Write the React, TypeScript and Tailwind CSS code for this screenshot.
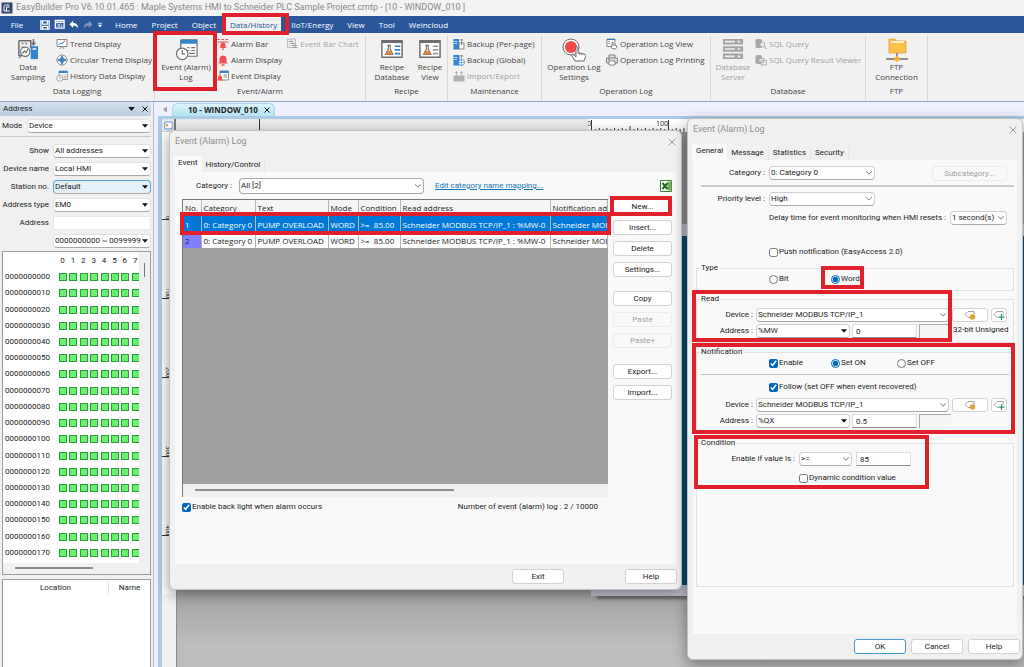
import type { ReactNode } from 'react';
import clsx from 'clsx';

const ADDRESS_ROWS = Array.from({ length: 18 }, (_, i) => String(i * 10).padStart(10, '0'));
const BITS = [0, 1, 2, 3, 4, 5, 6, 7];

const LOG_ROWS = [
  { no: '1', selected: true },
  { no: '2', selected: false },
];

/* ---------- icons ---------- */

function Svg({ size = 12, box = 24, children }: { size?: number; box?: number; children: ReactNode }) {
  return (
    <svg
      width={size}
      height={size}
      viewBox={`0 0 ${box} ${box}`}
      fill="none"
      stroke="#6d6d6d"
      strokeWidth="1.6"
      className="shrink-0"
      aria-hidden="true"
    >
      {children}
    </svg>
  );
}

const SamplingIcon = () => (
  <Svg size={22}>
    <path d="M2 3h13v8M2 3v16h4M5 6h2M9 6h2M5 10h2M5 14h2" />
    <circle cx="9" cy="15" r="5" fill="#fff" strokeWidth="1.2" />
    <path d="M6 17l2-3 2 2 2-4M5 19l-3 3" strokeWidth="1.2" />
    <path d="M18 1v6M16 5l2 2.500 2-2.500" />
    <path d="M15 9h8v14h-8z" fill="#2f83cf" stroke="none" />
    <path d="M17 12h4" stroke="#fff" />
  </Svg>
);

const TrendIcon = () => (
  <Svg>
    <path d="M2 3h20v14H2z" fill="#fff" />
    <path d="M5 14l4-4 3 2 3-4" stroke="#2f83cf" strokeWidth="2" />
    <path d="M14 9l5-4" stroke="#e0503a" strokeWidth="2" />
    <path d="M8 22l3-5M16 22l-3-5" />
  </Svg>
);

const CircularIcon = () => (
  <Svg>
    <circle cx="12" cy="12" r="10" fill="#fff" />
    <path d="M12 4l3 5 5 3-5 3-3 5-3-5-5-3 5-3z" fill="#2f83cf" stroke="#2f83cf" />
    <path d="M12 1v22M1 12h22" strokeWidth="1" />
  </Svg>
);

const ClockWindowIcon = ({ size = 12 }: { size?: number }) => (
  <Svg size={size}>
    <path d="M6 2h17v17H12M6 2v9" fill="#fff" strokeWidth="1.2" />
    <path d="M6 2h17v4H6z" fill="#2f83cf" stroke="none" />
    <path d="M13 10h2M17 10h4M13 13h2M17 13h4M15 16h6" strokeWidth="1.2" />
    <circle cx="7.500" cy="16.500" r="6" fill="#fff" strokeWidth="1.2" />
    <path d="M7.500 12.500v4h3" strokeWidth="1.2" />
  </Svg>
);

const AlarmBarIcon = () => (
  <Svg>
    <path d="M1 3h5M9 3h5M17 3h5M1 8h22" stroke="#d9534f" strokeWidth="2" />
    <path d="M5 20c2-2 2-4 2-6a5 5 0 0110 0c0 2 0 4 2 6z" fill="#ee5350" stroke="none" />
    <path d="M10 22h4" stroke="#ee5350" strokeWidth="2.500" />
  </Svg>
);

const BellIcon = () => (
  <Svg>
    <path d="M2 19c3-2 3-5 3-9a7 7 0 0114 0c0 4 0 7 3 9z" fill="#ee5350" stroke="none" />
    <path d="M9 22h6" stroke="#ee5350" strokeWidth="3" />
  </Svg>
);

const EventDisplayIcon = () => (
  <Svg>
    <path d="M6 2h17v18H6z" fill="#fff" />
    <path d="M6 2h17v4H6z" fill="#2f83cf" stroke="none" />
    <path d="M13 10h7M13 14h7" />
    <path d="M0 21c2-2 2-3 2-6a4 4 0 018 0c0 3 0 4 2 6z" fill="#ee5350" stroke="none" />
  </Svg>
);

const BarChartIcon = () => (
  <Svg>
    <path d="M3 2h16v17H3z" fill="#e6e6e6" stroke="#b4b4b4" />
    <path d="M6 7h8M9 11h9M12 15h10M14 19h9" stroke="#9d9d9d" strokeWidth="2" />
  </Svg>
);

const RecipeIcon = ({ accent }: { accent: string }) => (
  <Svg size={22}>
    <path d="M1 3h22v18H1z" fill="#fff" />
    <path d="M1 4h22" strokeWidth="3" />
    <path d="M7 8h4M8 8v4l-3 6h8l-3-6V8" strokeWidth="1.2" />
    <path d="M7 14h4l2 4H5z" fill="#e2873c" stroke="none" />
    <path d="M15 9h6M15 13h6M15 17h6" stroke={accent} strokeWidth="1.800" />
  </Svg>
);

const BackupIcon = () => (
  <Svg>
    <path d="M1 2h11v21H1z" fill="#2f83cf" stroke="none" />
    <path d="M3 7h6M3 11h5" stroke="#fff" />
    <path d="M12 10h10v12H12z" fill="#fff" />
    <path d="M17 14V2M14 5l3-3 3 3" />
  </Svg>
);

const ImportIcon = () => (
  <Svg>
    <path d="M1 11h22v12H1z" fill="#b0b0b0" stroke="none" />
    <path d="M7 11V3M4 6l3-3 3 3M17 11V3M14 6l3-3 3 3" stroke="#b0b0b0" strokeWidth="2" />
  </Svg>
);

const GlobalBackupIcon = () => (
  <Svg>
    <path d="M1 2h12v21H1z" fill="#2f83cf" stroke="none" />
    <path d="M3 7h6M3 11h5" stroke="#fff" />
    <circle cx="17" cy="17" r="6" fill="#fff" stroke="#2f83cf" />
    <path d="M11 17h12M17 11v12" stroke="#2f83cf" strokeWidth="1.2" />
    <path d="M17 9V2M14 5l3-3 3 3" />
  </Svg>
);

const RecordIcon = () => (
  <Svg size={24}>
    <circle cx="9" cy="9" r="8" fill="#fff" strokeWidth="1" />
    <circle cx="9" cy="9" r="6" fill="#ee4b48" stroke="none" />
    <path
      d="M13 23l-3-5c-1-2 1-2 2-1l2 2v-9c0-2 2-2 2 0v5l6 1c2 0 2 2 1 4l-1 3z"
      fill="#fff"
      strokeWidth="1"
    />
    <path d="M17.500 14.500v2M20 15v2" strokeWidth="1" />
  </Svg>
);

const LogViewIcon = () => (
  <Svg>
    <path d="M2 2h16v15H2z" fill="#fff" />
    <path d="M2 3h16" stroke="#2f83cf" strokeWidth="2" />
    <path d="M5 7h3M5 11h3" />
    <path d="M12 21l-3-5 3 1V9h2v5l7 1v4l-2 3z" fill="#fff" />
  </Svg>
);

const PrinterIcon = () => (
  <Svg>
    <path d="M6 8V2h12v6M1 8h22v10H1z" fill="#ddd" />
    <path d="M6 14h12v8H6z" fill="#fff" />
    <path d="M4 11h3" strokeWidth="2" />
  </Svg>
);

const ServerIcon = () => (
  <Svg size={22}>
    <path d="M1 1h22v6H1zM1 9h22v6H1zM1 17h22v6H1z" fill="#a3a3a3" stroke="none" />
    <path d="M3 4h11M17 4h3M3 12h11M17 12h3M3 20h11M17 20h3" stroke="#efefef" strokeWidth="1.800" />
  </Svg>
);

const QueryIcon = ({ viewer = false }: { viewer?: boolean }) => (
  <Svg>
    <path d="M1 4c0-3 13-3 13 0v14c0 3-13 3-13 0z" fill="#a8a8a8" stroke="none" />
    {viewer ? (
      <path d="M8 9h10v8H8zM12 13h11v9H12z" fill="#eee" stroke="#a0a0a0" />
    ) : (
      <>
        <circle cx="15" cy="13" r="5" fill="#eee" stroke="#a0a0a0" />
        <path d="M19 17l4 5" stroke="#a0a0a0" strokeWidth="2" />
      </>
    )}
  </Svg>
);

const FtpIcon = () => (
  <Svg size={24}>
    <path d="M4 1h6l2 2h9v12H4z" fill="#fbc04d" stroke="#e0a22f" strokeWidth="0.800" />
    <path d="M6 4h13" stroke="#fff" strokeWidth="1.500" />
    <path d="M12 15v4M1 21h22" strokeWidth="1.400" />
    <path d="M12 18l3 2v2l-3 2-3-2v-2z" fill="#fbb03b" stroke="none" />
  </Svg>
);

const ExcelIcon = () => (
  <Svg size={12}>
    <path d="M1 1h22v22H1z" fill="#fff" stroke="#3b7d32" strokeWidth="2" />
    <path d="M15 3h8v18h-8z" fill="#6fae5f" stroke="none" />
    <path d="M5 6l10 12M15 6L5 18" stroke="#1f6a22" strokeWidth="4" />
  </Svg>
);

const TagIcon = ({ add = false }: { add?: boolean }) => (
  <Svg>
    <path d="M8 5h12v12H8l-6-6z" fill="#fff" stroke="#8c8c8c" />
    {add ? (
      <>
        <path d="M17 9v14M10 16h14" stroke="#fff" strokeWidth="5" />
        <path d="M17 10v12M11 16h12" stroke="#2e9b62" strokeWidth="2.500" />
      </>
    ) : (
      <circle cx="17" cy="16" r="5.500" fill="#d9a43b" stroke="none" />
    )}
  </Svg>
);

const CloseIcon = ({ size = 8, color = '#8a8a8a', width = '2.500' }) => (
  <Svg size={size}>
    <path d="M2 2l20 20M22 2L2 22" stroke={color} strokeWidth={width} />
  </Svg>
);

/* ---------- shared controls ---------- */

interface DropdownProps {
  label: string;
  value: string;
  solid?: boolean;
  className?: string;
}

function Dropdown({ label, value, solid = false, className }: DropdownProps) {
  return (
    <span
      className={clsx(
        'grid min-w-0 items-center rounded-sm border border-b-[#a8a8a8]',
        className ?? 'h-[14px] border-[#cfcfcf] bg-white',
      )}
    >
      <select
        aria-label={label}
        className="col-start-1 row-start-1 h-full w-full appearance-none bg-transparent pl-px outline-none"
        defaultValue={value}
      >
        <option>{value}</option>
      </select>
      <svg
        viewBox="0 0 10 6"
        className="pointer-events-none col-start-1 row-start-1 mr-[2px] h-[4px] w-[6px] justify-self-end"
        aria-hidden="true"
      >
        {solid ? (
          <path d="M0 0h10L5 6z" fill="#111" />
        ) : (
          <path d="M0 0l5 5 5-5" fill="none" stroke="#666" strokeWidth="1.500" />
        )}
      </svg>
    </span>
  );
}

function Choice({ type = 'checkbox', name, label, checked = false }: {
  type?: 'checkbox' | 'radio';
  name?: string;
  label: string;
  checked?: boolean;
}) {
  return (
    <label className="flex items-center gap-px whitespace-nowrap">
      <input type={type} name={name} defaultChecked={checked} className="m-0 size-[9px] accent-[#0067c0]" />
      {label}
    </label>
  );
}

function PushButton({ children, className, disabled = false }: {
  children: ReactNode;
  className?: string;
  disabled?: boolean;
}) {
  return (
    <button
      type="button"
      disabled={disabled}
      className={clsx(
        'flex h-[15px] items-center justify-center rounded-[3px] border',
        disabled ? 'border-[#ececec] bg-[#f9f9f9] text-[#a0a0a0]' : 'bg-white',
        !disabled && (className?.includes('border-') ? '' : 'border-[#d2d2d2]'),
        className,
      )}
    >
      {children}
    </button>
  );
}

function Tabs({ items }: { items: string[] }) {
  return (
    <div role="tablist" className="flex h-4 items-end pl-[4px]">
      {items.map((item, i) => (
        <button
          key={item}
          type="button"
          role="tab"
          aria-selected={i === 0}
          className={clsx('px-[4px]', i === 0 ? 'h-4 bg-[#f9f9f9] pb-[2px]' : 'h-[14px] border-r border-[#e6e6e6]')}
        >
          {item}
        </button>
      ))}
    </div>
  );
}

function DialogTitle() {
  return (
    <div className="flex h-[21px] items-center justify-between pl-[5px] pr-[5px] text-[9px] text-[#8e8e8e]">
      <h2>Event (Alarm) Log</h2>
      <button type="button" aria-label="Close">
        <CloseIcon />
      </button>
    </div>
  );
}

/* ---------- ribbon ---------- */

function BigButton({ icon, lines, className, muted = false }: {
  icon: ReactNode;
  lines: [string, string];
  className: string;
  muted?: boolean;
}) {
  return (
    <button
      type="button"
      className={clsx('flex shrink-0 flex-col items-center whitespace-nowrap pt-[3px] leading-[10px]', muted && 'text-[#a0a0a0]', className)}
    >
      <span className="flex h-[24px] items-start">{icon}</span>
      <span>{lines[0]}</span>
      <span>{lines[1]}</span>
    </button>
  );
}

function SmallButton({ icon, label, muted = false }: { icon: ReactNode; label: string; muted?: boolean }) {
  return (
    <button type="button" className={clsx('flex h-4 items-center gap-[2px] whitespace-nowrap', muted && 'text-[#a0a0a0]')}>
      {icon}
      {label}
    </button>
  );
}

function RibbonGroup({ title, className, children }: { title: string; className: string; children: ReactNode }) {
  return (
    <section className={clsx('flex shrink-0 flex-col border-r border-[#dadada]', className)}>
      <div className="flex h-[49px]">{children}</div>
      <h3 className="text-center leading-[14px]">{title}</h3>
    </section>
  );
}

function SmallList({ children }: { children: ReactNode }) {
  return <div className="flex flex-col items-start pt-px">{children}</div>;
}

function Ribbon() {
  return (
    <div className="flex h-[69px] overflow-hidden border-b border-[#8ea3c4] bg-[#f1f1f1] pt-[2px] text-[8px] text-[#444]">
      <RibbonGroup title="Data Logging" className="w-[155px]">
        <BigButton className="w-[56px]" icon={<SamplingIcon />} lines={['Data', 'Sampling']} />
        <SmallList>
          <SmallButton icon={<TrendIcon />} label="Trend Display" />
          <SmallButton icon={<CircularIcon />} label="Circular Trend Display" />
          <SmallButton icon={<ClockWindowIcon />} label="History Data Display" />
        </SmallList>
      </RibbonGroup>
      <RibbonGroup title="Event/Alarm" className="w-[211px]">
        <BigButton className="w-[62px]" icon={<ClockWindowIcon size={23} />} lines={['Event (Alarm)', 'Log']} />
        <SmallList>
          <SmallButton icon={<AlarmBarIcon />} label="Alarm Bar" />
          <SmallButton icon={<BellIcon />} label="Alarm Display" />
          <SmallButton icon={<EventDisplayIcon />} label="Event Display" />
        </SmallList>
        <div className="pl-[4px] pt-px">
          <SmallButton icon={<BarChartIcon />} label="Event Bar Chart" muted />
        </div>
      </RibbonGroup>
      <RibbonGroup title="Recipe" className="w-[82px]">
        <BigButton className="w-[52px]" icon={<RecipeIcon accent="#2f83cf" />} lines={['Recipe', 'Database']} />
        <BigButton className="w-[24px]" icon={<RecipeIcon accent="#9a9a9a" />} lines={['Recipe', 'View']} />
      </RibbonGroup>
      <RibbonGroup title="Maintenance" className="w-[94px] [&>div]:pl-[5px]">
        <SmallList>
          <SmallButton icon={<BackupIcon />} label="Backup (Per-page)" />
          <SmallButton icon={<GlobalBackupIcon />} label="Backup (Global)" />
          <SmallButton icon={<ImportIcon />} label="Import/Export" muted />
        </SmallList>
      </RibbonGroup>
      <RibbonGroup title="Operation Log" className="w-[169px]">
        <BigButton className="w-[64px]" icon={<RecordIcon />} lines={['Operation Log', 'Settings']} />
        <SmallList>
          <SmallButton icon={<LogViewIcon />} label="Operation Log View" />
          <SmallButton icon={<PrinterIcon />} label="Operation Log Printing" />
        </SmallList>
      </RibbonGroup>
      <RibbonGroup title="Database" className="w-[155px]">
        <BigButton className="w-[44px]" icon={<ServerIcon />} lines={['Database', 'Server']} muted />
        <SmallList>
          <SmallButton icon={<QueryIcon />} label="SQL Query" muted />
          <SmallButton icon={<QueryIcon viewer />} label="SQL Query Result Viewer" muted />
        </SmallList>
      </RibbonGroup>
      <RibbonGroup title="FTP" className="w-[62px]">
        <BigButton className="w-full" icon={<FtpIcon />} lines={['FTP', 'Connection']} />
      </RibbonGroup>
    </div>
  );
}

function MenuBar() {
  return (
    <nav className="flex h-[17px] items-center bg-[#2b579a] text-[8px] text-white">
      <button type="button" className="w-[34px] text-center">File</button>
      <div className="flex w-[77px] items-center gap-[4px] pl-[6px]">
        <Svg size={10}>
          <path d="M2 2h20v20H2zM6 2v8h12V2M6 22v-7h12v7" stroke="#fff" strokeWidth="3" />
        </Svg>
        <Svg size={11}>
          <path d="M3 3h19v17H3zM3 7h19" stroke="#fff" strokeWidth="3" />
          <path d="M7 10l7 8M14 10l-7 8M17 12v6" stroke="#fff" strokeWidth="2" />
        </Svg>
        <Svg size={10}>
          <path d="M1 10l9-8v5c8 0 12 5 12 13-3-5-7-6-12-6v5z" fill="#fff" stroke="none" />
        </Svg>
        <Svg size={10}>
          <path d="M23 10l-9-8v5C6 7 2 12 2 20c3-5 7-6 12-6v5z" fill="#8397bd" stroke="none" />
        </Svg>
        <Svg size={6}>
          <path d="M4 5h16" stroke="#fff" strokeWidth="3" />
          <path d="M3 11h18l-9 10z" fill="#fff" stroke="none" />
        </Svg>
      </div>
      <div className="flex h-full items-center gap-[6px] whitespace-nowrap [&>button]:px-[4px]">
        <button type="button">Home</button>
        <button type="button">Project</button>
        <button type="button">Object</button>
        <button type="button" className="h-full bg-[#f1f1f1] text-[#2b579a]">Data/History</button>
        <button type="button">IIoT/Energy</button>
        <button type="button">View</button>
        <button type="button">Tool</button>
        <button type="button">Weincloud</button>
      </div>
    </nav>
  );
}

/* ---------- address dock ---------- */

const FIELD = 'h-[14px] border-[#e2e2e2] bg-white';

const ADDRESS_FIELDS = [
  { label: 'Show', value: 'All addresses' },
  { label: 'Device name', value: 'Local HMI' },
  { label: 'Station no.', value: 'Default', active: true },
  { label: 'Address type', value: 'EM0' },
];

function AddressDock() {
  return (
    <aside className="flex w-[154px] shrink-0 flex-col overflow-hidden border-r border-[#b9bccb] bg-[#f0f0f0] pr-[2px] font-[Roboto,sans-serif] text-[8px] text-[#222]">
      <header className="flex h-[14px] items-center gap-[7px] bg-gradient-to-b from-[#d4e0ee] to-[#bccde0] px-[3px]">
        <h2 className="flex-1">Address</h2>
        <svg viewBox="0 0 10 6" className="h-[4px] w-[7px]" aria-hidden="true">
          <path d="M0 0h10L5 6z" fill="#111" />
        </svg>
        <button type="button" aria-label="Close dock">
          <CloseIcon size={6} color="#111" width="4" />
        </button>
      </header>
      <div className="flex h-[21px] items-center gap-[4px] border-b border-[#c8c8c8] pl-[2px]">
        <span className="w-[21px]">Mode</span>
        <Dropdown label="Mode" value="Device" solid className={clsx(FIELD, 'flex-1')} />
      </div>
      <div className="grid grid-cols-[49px_minmax(0,1fr)] items-center gap-x-[4px] gap-y-[4px] pt-[7px] text-right">
        {ADDRESS_FIELDS.map((field) => (
          <div key={field.label} className="contents">
            <span className="flex justify-end whitespace-nowrap">{field.label}</span>
            <Dropdown
              label={field.label}
              value={field.value}
              solid
              className={field.active ? 'h-[14px] border-[#5aa5d8] bg-[#e4f1fb]' : FIELD}
            />
          </div>
        ))}
        <label htmlFor="address">Address</label>
        <input id="address" className="h-[14px] w-full min-w-0 border border-[#e8e8e8] bg-white" />
        <span />
        <Dropdown label="Address range" value="0000000000 ~ 0099999" solid className={FIELD} />
      </div>

      <div className="ml-[2px] mt-[3px] flex h-[324px] flex-col border border-[#9d9d9d] bg-[#f0f0f0]">
        <div className="flex h-[311px] shrink-0">
          <div className="flex w-[136px] flex-col overflow-hidden bg-white pb-[2px]">
            <div className="flex h-[17px] shrink-0 items-center">
              <span className="w-[54px] shrink-0" />
              <div className="grid w-[84px] shrink-0 grid-cols-8 pl-px text-center">
                {BITS.map((bit) => (
                  <span key={bit} className="w-[9px]">{bit}</span>
                ))}
              </div>
            </div>
            {ADDRESS_ROWS.map((row) => (
              <div key={row} className="flex flex-1 items-center">
                <span className="w-[55px] shrink-0 pl-[2px]">{row}</span>
                <div className="grid w-[84px] shrink-0 grid-cols-8 pl-px">
                  {BITS.map((bit) => (
                    <span key={bit} className="size-[8px] border border-[#2f9a3c] bg-[#66f26b]" />
                  ))}
                </div>
              </div>
            ))}
          </div>
          <div className="flex-1 pl-[5px] pt-[11px]">
            <div className="h-[14px] w-px bg-[#777]" />
          </div>
        </div>
        <div className="ml-[12px] mt-[4px] h-[2px] w-[78px] bg-[#8f8f8f]" />
      </div>

      <div className="ml-[2px] mt-[4px] flex-1 border border-b-0 border-[#9d9d9d] bg-white">
        <div className="flex h-4 items-center text-center">
          <span className="w-[106px] border-r border-[#e4e4e4]">Location</span>
          <span className="flex-1">Name</span>
        </div>
      </div>
    </aside>
  );
}

/* ---------- editor ---------- */

function Editor() {
  return (
    <main className="flex min-w-0 flex-1 flex-col bg-[#eef0ff] pl-[4px] text-[8px]">
      <div className="flex h-[14px] items-end">
        <button type="button" aria-label="Previous" className="flex h-full w-[14px] items-center justify-center">
          <svg viewBox="0 0 6 8" className="h-[5px] w-[4px]" aria-hidden="true">
            <path d="M5 1v6L1 4z" fill="none" stroke="#333" />
          </svg>
        </button>
        <div className="flex h-[13px] items-center gap-[6px] rounded-t-md border border-b-0 border-[#a5d5e8] bg-gradient-to-b from-[#d9f3fb] to-[#b4e2f2] pl-[15px] pr-[4px] text-[#222]">
          <b className="whitespace-nowrap">10 - WINDOW_010</b>
          <CloseIcon size={6} color="#111" width="4" />
        </div>
      </div>
      <div className="flex flex-1 flex-col border-l-4 border-t-[3px] border-[#abcbe6] bg-[#f0f0f0]">
        <div className="flex h-[13px] border-b border-[#cfcfcf]">
          <div className="flex w-[14px] items-center justify-center border-r-2 border-[#777] bg-[#e2e8f2]">
            <Svg size={9}>
              <path d="M2 3h20v18H2z" fill="#fff" stroke="#4a7fc0" strokeWidth="2" />
              <path d="M5 8h6v6H5z" fill="#e6a04a" stroke="none" />
            </Svg>
          </div>
          <div className="w-[84px] border-r border-[#333] bg-[#e9e9e9]" />
          <div className="w-[328px] bg-[#e9e9e9]" />
          <Ruler />
        </div>
        <div className="flex flex-1">
          <div className="w-[15px] border-r border-[#8c8c8c]">
            <div className="flex h-[462px] flex-col items-start justify-between bg-white pb-[58px] pt-[84px]">
              {['0', '100', '200', '300', '400'].map((mark) => (
                <span key={mark} className="border-b border-[#333] text-[6px] leading-[11px] [writing-mode:vertical-rl]">
                  {mark}
                </span>
              ))}
            </div>
          </div>
          <div className="min-w-0 flex-1 bg-gradient-to-b from-[#9d9d9d] from-0% via-[#a3a3a3] via-[86%] to-[#bdbdbd] to-[96%]">
            <div className="h-[104px] border-b-[12px] border-[#cfcfdb]" />
            <div className="ml-[414px] h-[360px] border-b-[11px] border-[#c6c6d8] bg-[#0b5278] shadow-[6px_3px_3px_#666]" />
          </div>
        </div>
      </div>
    </main>
  );
}

function Ruler() {
  return (
    <svg className="h-[13px] flex-1 bg-white" aria-hidden="true">
      {Array.from({ length: 14 }, (_, i) => (
        <path
          key={i}
          d={`M${3.5 + i * 7.7} ${i % 10 === 0 ? 1 : i % 5 === 0 ? 7 : 9}V13M${7.4 + i * 7.7} 10V13`}
          stroke="#333"
        />
      ))}
      <text x="-1" y="7" fontSize="7" fill="#222">0</text>
      <text x="68" y="7" fontSize="7" fill="#222">100</text>
    </svg>
  );
}

/* ---------- event log list dialog ---------- */

const CELL = "overflow-hidden whitespace-nowrap border-r border-[#b5b5b5] px-[2px] font-['Open_Sans',sans-serif]";

function EventLogDialog() {
  return (
    <section className="absolute left-[169px] top-[130px] flex h-[460px] w-[513px] flex-col rounded-md border border-[#c2c2c2] bg-[#f0f0f0] font-[Roboto,sans-serif] text-[8px] text-[#222] shadow-[0_4px_14px_rgba(0,0,0,0.4)]">
      <DialogTitle />
      <div className="pt-[4px]">
        <Tabs items={['Event', 'History/Control']} />
      </div>
      <div className="mx-[5px] flex flex-1 flex-col bg-[#f9f9f9] pl-[7px] pr-[4px] pt-[6px]">
        <div className="flex h-4 items-center">
          <label htmlFor="log-category" className="w-[54px] pr-[4px] text-right">Category :</label>
          <div id="log-category" className="ml-[3px] grid w-[185px] grid-cols-1">
            <Dropdown label="Category filter" value="All [2]" className="h-4 border-[#a9a9a9] bg-white" />
          </div>
          <a href="#mapping" className="ml-[11px] text-[#1474b8] underline">Edit category name mapping...</a>
          <button type="button" aria-label="Export to Excel" className="ml-auto">
            <ExcelIcon />
          </button>
        </div>
        <div className="flex gap-[5px] pt-[5px]">
          <div className="h-[298px] min-w-0 flex-1 border-l border-t border-[#777] bg-[#f0f0f0]">
            <div className="h-[284px] overflow-hidden bg-[#a0a0a0]">
              <table className="w-full table-fixed border-collapse">
                <colgroup>
                  <col className="w-[18px]" />
                  <col className="w-[54px]" />
                  <col className="w-[73px]" />
                  <col className="w-[30px]" />
                  <col className="w-[42px]" />
                  <col className="w-[150px]" />
                  <col />
                </colgroup>
                <thead>
                  <tr className="h-4 bg-[#f5f5f5] text-left">
                    {['No.', 'Category', 'Text', 'Mode', 'Condition', 'Read address', 'Notification address'].map((head) => (
                      <th key={head} className={clsx(CELL, 'border-[#777] font-normal')}>{head}</th>
                    ))}
                  </tr>
                </thead>
                <tbody>
                  {LOG_ROWS.map((row) => (
                    <tr key={row.no} className={row.selected ? 'h-[17px] bg-[#0078d7] text-white' : 'h-[15px] bg-white'}>
                      <td className={clsx(CELL, !row.selected && 'bg-[#8080ff]')}>{row.no}</td>
                      <td className={CELL}>0: Category 0</td>
                      <td className={CELL}>PUMP OVERLOAD</td>
                      <td className={CELL}>WORD</td>
                      <td className={CELL}>&gt;=&nbsp; 85.00</td>
                      <td className={CELL}>Schneider MODBUS TCP/IP_1 : %MW-0</td>
                      <td className={CELL}>Schneider MODBUS</td>
                    </tr>
                  ))}
                </tbody>
              </table>
            </div>
            <div className="ml-[12px] mt-[5px] h-[2px] w-[259px] bg-[#8f8f8f]" />
          </div>
          <div className="flex w-[59px] flex-col gap-[14px]">
            <div className="flex flex-col gap-[6px]">
              <PushButton>New...</PushButton>
              <PushButton>Insert...</PushButton>
              <PushButton>Delete</PushButton>
              <PushButton>Settings...</PushButton>
            </div>
            <div className="flex flex-col gap-[6px]">
              <PushButton>Copy</PushButton>
              <PushButton disabled>Paste</PushButton>
              <PushButton disabled>Paste+</PushButton>
            </div>
            <div className="flex flex-col gap-[6px] pt-[2px]">
              <PushButton>Export...</PushButton>
              <PushButton>Import...</PushButton>
            </div>
          </div>
        </div>
        <div className="flex items-center justify-between pr-[74px] pt-[4px]">
          <Choice label="Enable back light when alarm occurs" checked />
          <span>Number of event (alarm) log : 2 / 10000</span>
        </div>
      </div>
      <footer className="flex h-[25px] items-center justify-end gap-[61px] pr-[4px]">
        <PushButton className="w-[52px]">Exit</PushButton>
        <PushButton className="w-[52px]">Help</PushButton>
      </footer>
    </section>
  );
}

/* ---------- event settings dialog ---------- */

function Fieldset({ title, className, children }: { title: string; className: string; children: ReactNode }) {
  return (
    <fieldset className={clsx('mx-[3px] min-w-0 border border-[#e2e2e2]', className)}>
      <legend className="ml-[4px] pr-[2px] leading-[10px]">{title}</legend>
      {children}
    </fieldset>
  );
}

function DeviceAddress({ id, area, address, format }: { id: string; area: string; address: string; format?: string }) {
  return (
    <div className="grid grid-cols-[56px_minmax(0,1fr)] gap-x-[3px] gap-y-[2px] pr-[6px]">
      <span className="text-right leading-[14px]">Device :</span>
      <div className="flex gap-[3px]">
        <div className="grid flex-1 grid-cols-1">
          <Dropdown label={`${id} device`} value="Schneider MODBUS TCP/IP_1" />
        </div>
        <button type="button" aria-label="Tag library" className="flex h-[14px] w-[36px] items-center justify-center rounded-[3px] border border-[#d2d2d2] bg-white">
          <TagIcon />
        </button>
        <button type="button" aria-label="Add tag" className="flex h-[14px] w-4 items-center justify-center rounded-[3px] border border-[#d2d2d2] bg-white">
          <TagIcon add />
        </button>
      </div>
      <label htmlFor={`${id}-address`} className="text-right leading-[14px]">Address :</label>
      <div className="flex gap-[2px]">
        <div className="grid w-[94px] shrink-0 grid-cols-1">
          <Dropdown label={`${id} area`} value={area} solid />
        </div>
        <input
          id={`${id}-address`}
          defaultValue={address}
          className="h-[14px] w-[65px] shrink-0 border border-[#dcdcdc] border-b-[#8a8a8a] bg-white pl-[3px]"
        />
        <span className="h-[14px] w-[32px] shrink-0 border-l border-t border-[#a8a8a8] bg-[#f5f5f5]" />
        {format ? <span className="whitespace-nowrap leading-[12px]">{format}</span> : null}
      </div>
    </div>
  );
}

function EventSettingsDialog() {
  return (
    <section className="absolute left-[687px] top-[118px] flex h-[542px] w-[336px] flex-col rounded-md border border-[#c2c2c2] bg-[#f0f0f0] font-[Roboto,sans-serif] text-[8px] text-[#222] shadow-[0_4px_14px_rgba(0,0,0,0.4)]">
      <DialogTitle />
      <div className="pt-[4px]">
        <Tabs items={['General', 'Message', 'Statistics', 'Security']} />
      </div>
      <div className="mx-[5px] flex flex-1 flex-col bg-[#f9f9f9] pt-[6px]">
        <div className="grid grid-cols-[72px_106px_minmax(0,1fr)] gap-x-[4px] pr-[10px]">
          <span className="text-right leading-[14px]">Category :</span>
          <Dropdown label="Category" value="0: Category 0" />
          <PushButton disabled className="w-[75px] justify-self-end">Subcategory...</PushButton>
        </div>
        <hr className="ml-[8px] mr-[3px] mt-[4px] border-t-2 border-[#cacaca]" />
        <div className="grid grid-cols-[72px_106px] gap-x-[4px] pt-[5px]">
          <span className="text-right leading-[14px]">Priority level :</span>
          <Dropdown label="Priority level" value="High" />
        </div>
        <div className="flex justify-end gap-[4px] pr-[10px] pt-[5px]">
          <span className="leading-[14px]">Delay time for event monitoring when HMI resets :</span>
          <div className="grid w-[57px] grid-cols-1">
            <Dropdown label="Delay time" value="1 second(s)" />
          </div>
        </div>
        <div className="flex h-[38px] items-end pb-[5px] pl-[76px]">
          <Choice label="Push notification (EasyAccess 2.0)" />
        </div>

        <Fieldset title="Type" className="h-[28px]">
          <div className="grid grid-cols-[62px_66px] pl-[72px]">
            <Choice type="radio" name="type" label="Bit" />
            <Choice type="radio" name="type" label="Word" checked />
          </div>
        </Fieldset>
        <Fieldset title="Read" className="mt-[3px] h-[49px] pt-[4px]">
          <DeviceAddress id="read" area="%MW" address="0" format="32-bit Unsigned" />
        </Fieldset>
        <Fieldset title="Notification" className="mt-[4px] h-[87px]">
          <div className="grid grid-cols-[62px_66px_1fr] pl-[72px]">
            <Choice label="Enable" checked />
            <Choice type="radio" name="state" label="Set ON" checked />
            <Choice type="radio" name="state" label="Set OFF" />
          </div>
          <hr className="mx-[4px] mb-[6px] mt-[5px] border-[#bdbdbd]" />
          <div className="mb-[5px] pl-[72px]">
            <Choice label="Follow (set OFF when event recovered)" checked />
          </div>
          <DeviceAddress id="notify" area="%QX" address="0.5" />
        </Fieldset>
        <Fieldset title="Condition" className="mt-[4px] h-[149px]">
          <div className="grid grid-cols-[98px_53px_55px] gap-x-[4px] pt-[4px]">
            <label htmlFor="threshold" className="text-right leading-[14px]">Enable if value is :</label>
            <Dropdown label="Operator" value=">=" />
            <input
              id="threshold"
              defaultValue="85"
              className="h-[14px] w-full border border-[#dcdcdc] border-b-[#8a8a8a] bg-white pl-[3px]"
            />
          </div>
          <div className="pl-[102px] pt-[6px]">
            <Choice label="Dynamic condition value" />
          </div>
        </Fieldset>
      </div>
      <footer className="flex h-[25px] items-center justify-end gap-[5px] pr-[2px]">
        <PushButton className="w-[52px] border-[#3f9bd0]">OK</PushButton>
        <PushButton className="w-[52px]">Cancel</PushButton>
        <PushButton className="w-[52px]">Help</PushButton>
      </footer>
    </section>
  );
}

/* ---------- callouts ---------- */

const CALLOUTS = [
  'left-[222px] top-[13px] h-[22px] w-[67px]',
  'left-[153px] top-[31px] h-[60px] w-[64px]',
  'left-[180px] top-[212px] h-[23px] w-[431px]',
  'left-[610px] top-[196px] h-[20px] w-[62px]',
  'left-[821px] top-[266px] h-[23px] w-[43px]',
  'left-[692px] top-[290px] h-[52px] w-[260px]',
  'left-[692px] top-[343px] h-[91px] w-[323px]',
  'left-[694px] top-[435px] h-[54px] w-[235px]',
];

export default function App() {
  return (
    <div className="relative flex h-screen flex-col overflow-hidden bg-[#f0f0f0] font-['Open_Sans',sans-serif]">
      <header className="flex h-4 items-center gap-[3px] bg-[#f3f3f3] pl-px font-[Roboto,sans-serif] text-[9px] text-[#8a8a8a]">
        <Svg size={12}>
          <path d="M1 1h22v22H1z" fill="#33486f" stroke="none" />
          <path d="M17 6H9a3 3 0 00-3 3v9h6M17 10h-6v8h7" stroke="#fff" strokeWidth="2" />
        </Svg>
        <h1 className="whitespace-nowrap">
          EasyBuilder Pro V6.10.01.465 : Maple Systems HMI to Schneider PLC Sample Project.cmtp - [10 - WINDOW_010 ]
        </h1>
      </header>
      <MenuBar />
      <Ribbon />
      <div className="flex min-h-0 flex-1">
        <AddressDock />
        <Editor />
      </div>
      <EventLogDialog />
      <EventSettingsDialog />
      {CALLOUTS.map((place) => (
        <div key={place} className={clsx('pointer-events-none absolute border-4 border-[#e0202b]', place)} />
      ))}
    </div>
  );
}
